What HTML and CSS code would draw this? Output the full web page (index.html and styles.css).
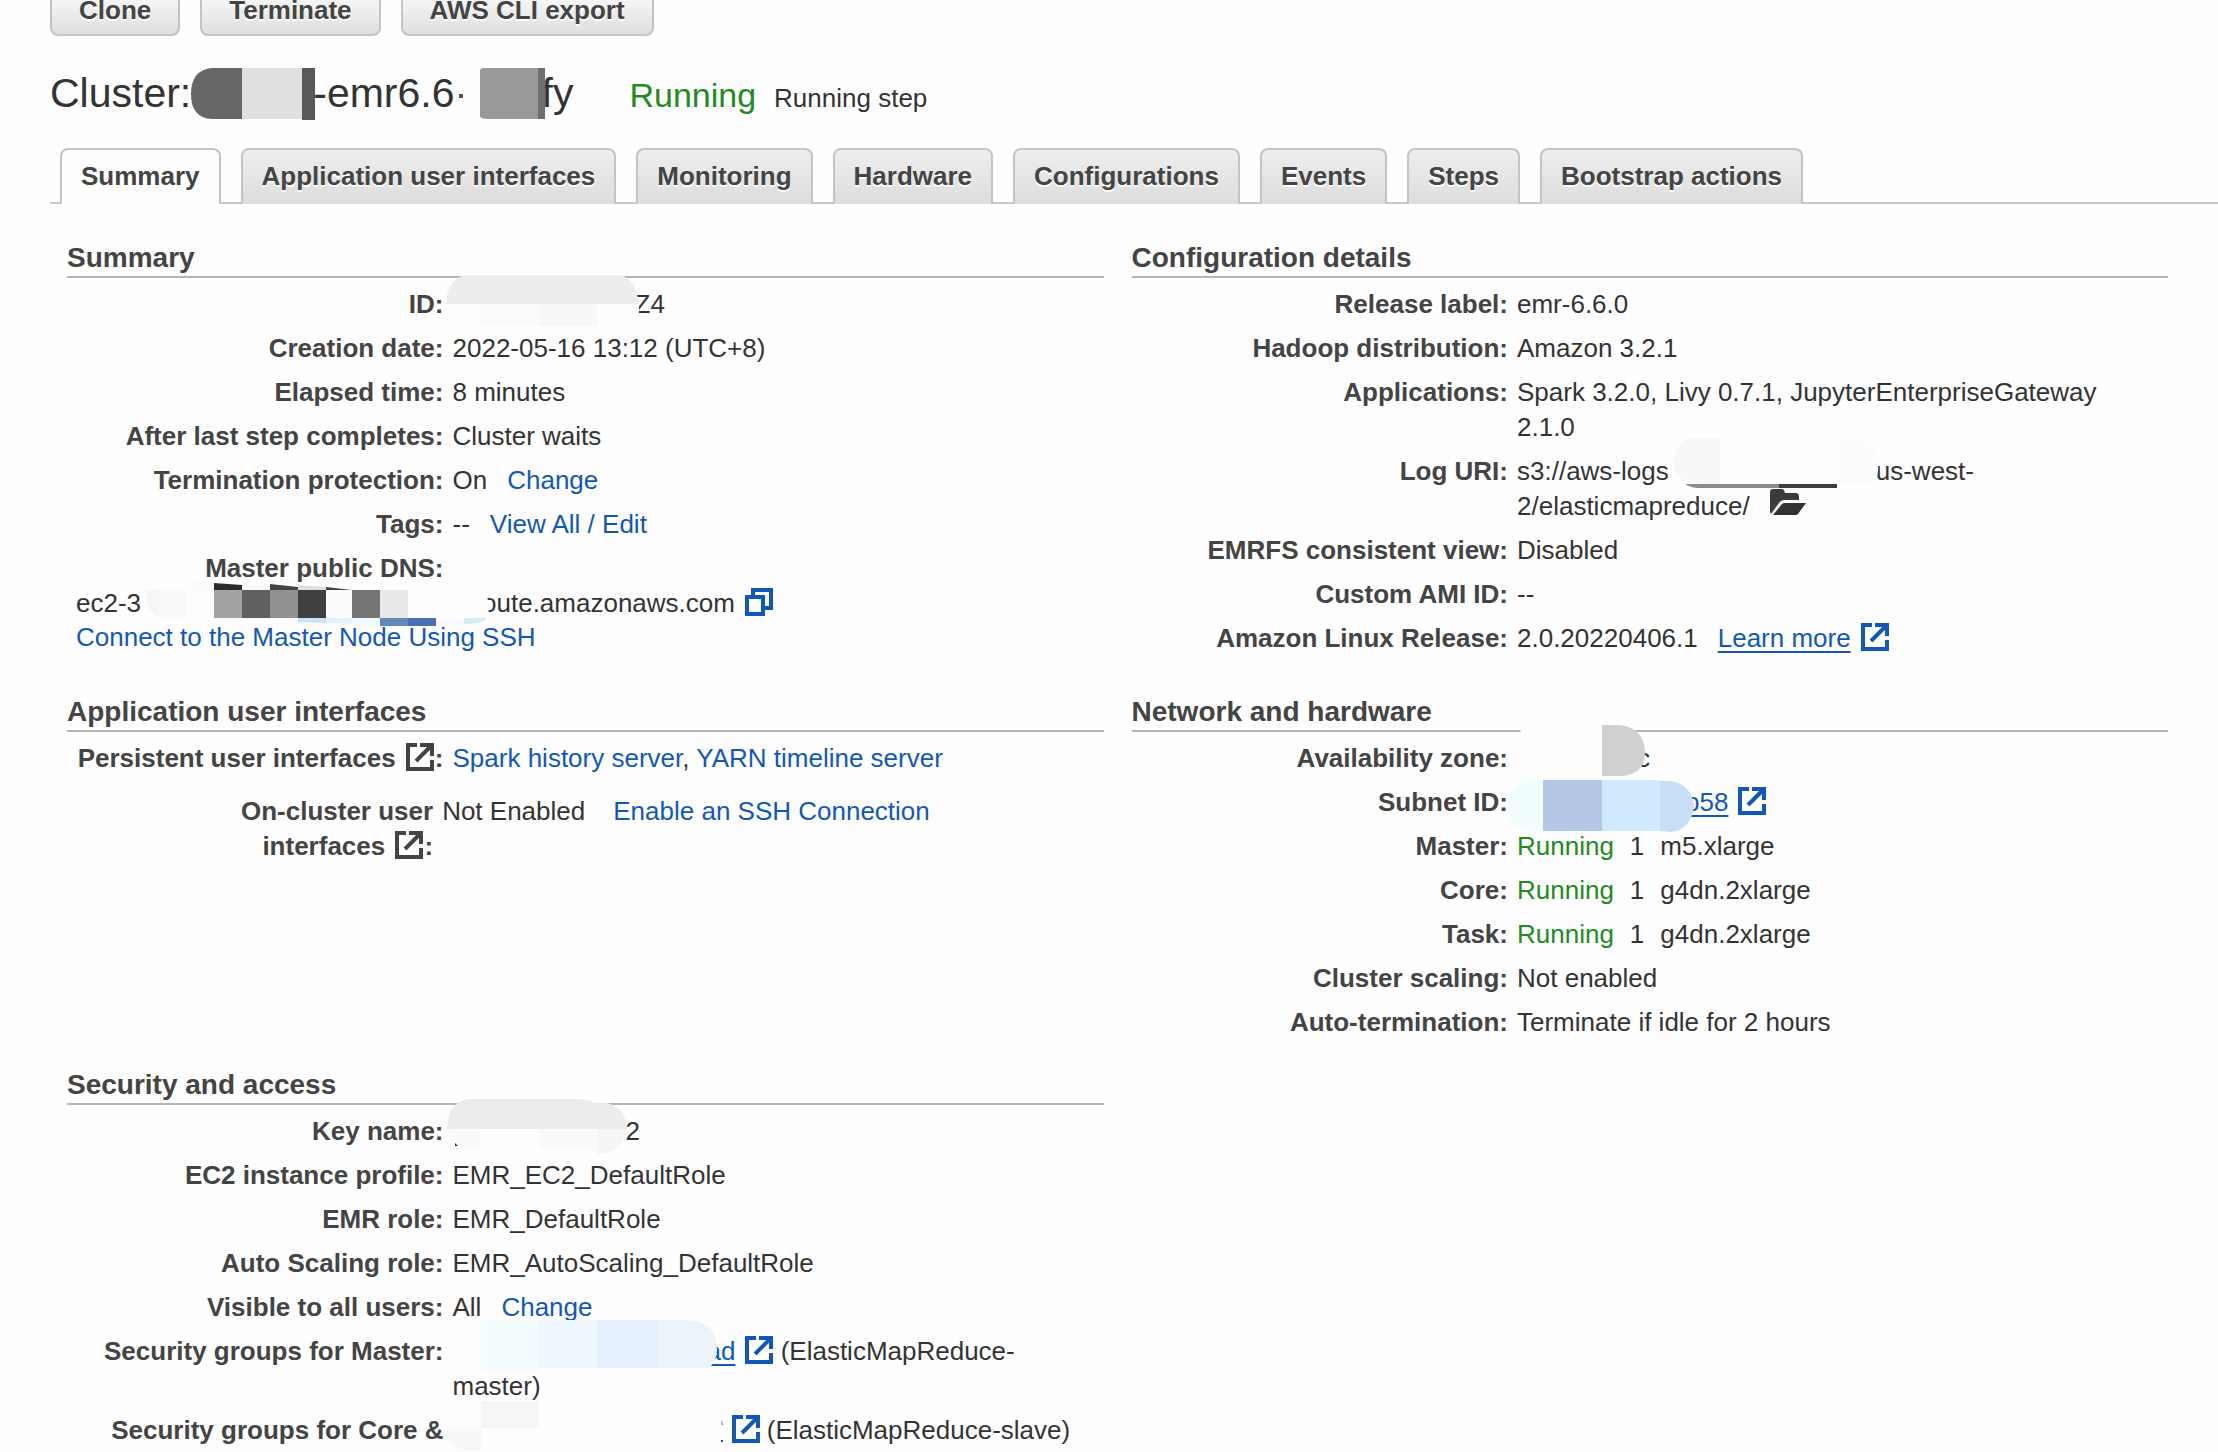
FILE: index.html
```html
<!DOCTYPE html>
<html lang="en">
<head>
<meta charset="utf-8">
<title>Cluster details</title>
<link rel="stylesheet" href="styles.css">
</head>
<body>
<svg class="sprite" aria-hidden="true">
  <symbol id="external" viewBox="0 0 28 28">
    <path d="M11 2H2V26H26V17M14 2H26V13M10 18L25 3" fill="none" stroke="currentColor" stroke-width="4"/>
  </symbol>
  <symbol id="copy" viewBox="0 0 28 28">
    <path d="M2 9H18V26H2ZM8 9V2H26V20H18" fill="none" stroke="currentColor" stroke-width="4"/>
  </symbol>
</svg>

<div class="toolbar">
  <button type="button">Clone</button>
  <button type="button">Terminate</button>
  <button type="button">AWS CLI export</button>
</div>

<header class="title">
  <h1>Cluster:<span class="mask mask-name"><svg viewBox="191 81 122 26" width="122" height="26"><path d="M242 68H212Q191 70 191 94T212 119H242Z" fill="#666"/><path d="M242 68H302V119H242Z" fill="#e0e0e0"/><path d="M302 68H315V120H302Z" fill="#595959"/></svg></span>-emr6.6<span class="mask mask-suffix"><svg viewBox="455 81 87 26" width="87" height="26"><path d="M459 94H463V98H459Z" fill="#555"/><path d="M538 68H484Q480 68 480 71V116Q480 119 488 119H538Z" fill="#999"/><path d="M538 68H545V119H538Z" fill="#6e6e6e"/></svg></span>fy</h1>
  <span class="state ok">Running</span>
  <span class="step">Running step</span>
</header>

<nav class="tabs">
  <a class="tab active" href="#summary">Summary</a>
  <a class="tab" href="#interfaces">Application user interfaces</a>
  <a class="tab" href="#monitoring">Monitoring</a>
  <a class="tab" href="#hardware">Hardware</a>
  <a class="tab" href="#configurations">Configurations</a>
  <a class="tab" href="#events">Events</a>
  <a class="tab" href="#steps">Steps</a>
  <a class="tab" href="#bootstrap">Bootstrap actions</a>
</nav>

<main class="panels">
  <section class="tall" id="summary">
    <h2>Summary</h2>
    <dl>
      <div class="row"><dt>ID:</dt><dd><span class="mask mask-id"><svg viewBox="452 288 182 26" width="182" height="26"><path d="M445 305Q446 279 466 276H617Q634 277 638 305Z" fill="#ededed"/><path d="M445 305H638V327H468Q450 327 445 305Z" fill="#fefefe"/><path d="M479 305H538V327H479Z" fill="#fbfbfb"/><path d="M538 305H596V327H538Z" fill="#f8f8f8"/></svg></span>Z4</dd></div>
      <div class="row"><dt>Creation date:</dt><dd>2022-05-16 13:12 (UTC+8)</dd></div>
      <div class="row"><dt>Elapsed time:</dt><dd>8 minutes</dd></div>
      <div class="row"><dt>After last step completes:</dt><dd>Cluster waits</dd></div>
      <div class="row"><dt>Termination protection:</dt><dd>On<a class="action" href="#change">Change</a></dd></div>
      <div class="row"><dt>Tags:</dt><dd>--<a class="action" href="#tags">View All / Edit</a></dd></div>
      <div class="row"><dt>Master public DNS:</dt>
        <dd class="wide">ec2-3<span class="mask mask-dns"><svg viewBox="141 584 341 26" width="341" height="26"><path d="M145 588Q160 586 186 585V578H214V588H436L480 590Q488 592 489 603T480 620L440 623H186L172 616H160Q146 612 145 588Z" fill="#fdfdfd"/><path d="M145 588H159V616Q147 610 145 588Z" fill="#f6f6f8"/><path d="M159 588H186V616H159Z" fill="#fafafb"/><path d="M186 578L214 581V588H186Z" fill="#fafcff"/><path d="M214 581L242 583V588H214Z" fill="#2c2c2e"/><path d="M242 583H270V588H242Z" fill="#f5f8fa"/><path d="M270 582L298 585V588H270Z" fill="#444"/><path d="M298 583L326 585V588H298Z" fill="#ddd"/><path d="M326 585L352 588H326Z" fill="#444"/><path d="M214 588H242V616H214Z" fill="#a3a3a3"/><path d="M242 588H270V616H242Z" fill="#606060"/><path d="M270 588H298V616H270Z" fill="#919191"/><path d="M298 588H326V616H298Z" fill="#404042"/><path d="M326 588H352V616H326Z" fill="#fcfcfe"/><path d="M352 588H380V616H352Z" fill="#757575"/><path d="M380 588H408V616H380Z" fill="#e9e9eb"/><path d="M298 616H326V621L298 620Z" fill="#c9e4f8"/><path d="M326 616H352V622L326 621Z" fill="#e4f2f9"/><path d="M352 616H380V623H352Z" fill="#effdfe"/><path d="M380 616H408V624H380Z" fill="#6486b8"/><path d="M408 616H436V624H408Z" fill="#4870b5"/><path d="M436 616H464V622H436Z" fill="#f8faff"/><path d="M464 616H487Q484 622 464 622Z" fill="#d9ecf7"/></svg></span>oute.amazonaws.com<button class="icon-button" type="button" aria-label="Copy"><svg class="icon"><use href="#copy"/></svg></button><br><a href="#ssh">Connect to the Master Node Using SSH</a></dd></div>
    </dl>
  </section>

  <section class="tall">
    <h2>Configuration details</h2>
    <dl>
      <div class="row"><dt>Release label:</dt><dd>emr-6.6.0</dd></div>
      <div class="row"><dt>Hadoop distribution:</dt><dd>Amazon 3.2.1</dd></div>
      <div class="row"><dt>Applications:</dt><dd>Spark 3.2.0, Livy 0.7.1, JupyterEnterpriseGateway 2.1.0</dd></div>
      <div class="row"><dt>Log URI:</dt><dd>s3://aws-logs<span class="mask mask-log"><svg viewBox="1668 453 207 26" width="207" height="26"><path d="M1719 437H1693Q1673 440 1673 460T1690 483H1719Z" fill="#f8f8f8"/><path d="M1719 437H1836V483H1719Z" fill="#fdfdfd"/><path d="M1836 437H1858Q1875 442 1877 462T1864 483H1836Z" fill="#fcfcfc"/><path d="M1684 483H1778V487H1698Q1690 487 1684 483Z" fill="#8c8c8c"/><path d="M1778 483H1836V487H1778Z" fill="#3e3e3e"/></svg></span>us-west-2/elasticmapreduce/<svg class="folder" viewBox="0 0 36 26"><path d="M0 23V3Q0 0 3 0H12Q14 0 15 4H26Q29 4 29 8V11H14Q11 11 9 14L1 25Z" fill="#3b3b3b"/><path d="M3 26L12 15Q13 14 15 14H36L28 25Q27 26 26 26Z" fill="#333"/></svg></dd></div>
      <div class="row"><dt>EMRFS consistent view:</dt><dd>Disabled</dd></div>
      <div class="row"><dt>Custom AMI ID:</dt><dd>--</dd></div>
      <div class="row"><dt>Amazon Linux Release:</dt><dd>2.0.20220406.1<a class="action underlined" href="#learn">Learn more</a><svg class="icon link-icon"><use href="#external"/></svg></dd></div>
    </dl>
  </section>

  <section id="interfaces">
    <h2>Application user interfaces</h2>
    <dl>
      <div class="row"><dt>Persistent user interfaces <svg class="icon"><use href="#external"/></svg>:</dt><dd><a href="#spark">Spark history server</a>, <a href="#yarn">YARN timeline server</a></dd></div>
      <div class="row on-cluster"><dt>On-cluster user interfaces <svg class="icon"><use href="#external"/></svg>:</dt><dd>Not Enabled<a class="action spaced" href="#enable">Enable an SSH Connection</a></dd></div>
    </dl>
  </section>

  <section id="hardware">
    <h2>Network and hardware</h2>
    <dl>
      <div class="row"><dt>Availability zone:</dt><dd><span class="mask mask-zone"><svg viewBox="1516 742 120 26" width="120" height="26"><path d="M1601 726H1530Q1514 730 1514 750T1530 776H1601Z" fill="#fefefe"/><path d="M1601 726H1620Q1643 730 1644 752T1622 777H1601Z" fill="#d1d1d1"/></svg></span>c</dd></div>
      <div class="row"><dt>Subnet ID:</dt><dd><span class="mask mask-subnet"><svg viewBox="1516 785 168 26" width="168" height="26"><path d="M1542 780H1528Q1507 785 1506 806T1528 831H1542Z" fill="#f2fdfe"/><path d="M1542 780H1601V831H1542Z" fill="#b4c7e6"/><path d="M1601 780H1659V831H1601Z" fill="#d1e9fd"/><path d="M1659 781H1670Q1690 784 1693 806Q1690 830 1670 832L1659 831Z" fill="#c9dff7"/></svg></span><a class="underlined" href="#subnet">b58</a><svg class="icon link-icon"><use href="#external"/></svg></dd></div>
      <div class="row"><dt>Master:</dt><dd><span class="ok">Running</span><span class="count">1</span>m5.xlarge</dd></div>
      <div class="row"><dt>Core:</dt><dd><span class="ok">Running</span><span class="count">1</span>g4dn.2xlarge</dd></div>
      <div class="row"><dt>Task:</dt><dd><span class="ok">Running</span><span class="count">1</span>g4dn.2xlarge</dd></div>
      <div class="row"><dt>Cluster scaling:</dt><dd>Not enabled</dd></div>
      <div class="row"><dt>Auto-termination:</dt><dd>Terminate if idle for 2 hours</dd></div>
    </dl>
  </section>

  <section>
    <h2>Security and access</h2>
    <dl>
      <div class="row"><dt>Key name:</dt><dd><span class="mask mask-key"><svg viewBox="452 1115 173 26" width="173" height="26"><path d="M446 1130Q447 1102 468 1100H574Q586 1100 594 1104H606Q624 1108 626 1130Z" fill="#ececec"/><path d="M446 1130H626Q622 1152 602 1155L582 1150H468Q450 1149 446 1130Z" fill="#fefefe"/><path d="M446 1130H480V1150H468Q450 1149 446 1130Z" fill="#fafafb"/><path d="M538 1130H596V1154L582 1150H538Z" fill="#fafafa"/><path d="M596 1130H626Q622 1154 596 1155Z" fill="#f5f5f5"/><path d="M454 1144L457 1147H454Z" fill="#333"/></svg></span>2</dd></div>
      <div class="row"><dt>EC2 instance profile:</dt><dd>EMR_EC2_DefaultRole</dd></div>
      <div class="row"><dt>EMR role:</dt><dd>EMR_DefaultRole</dd></div>
      <div class="row"><dt>Auto Scaling role:</dt><dd>EMR_AutoScaling_DefaultRole</dd></div>
      <div class="row"><dt>Visible to all users:</dt><dd>All<a class="action" href="#visibility">Change</a></dd></div>
      <div class="row"><dt>Security groups for Master:</dt><dd><span class="mask mask-master"><svg viewBox="452 1334 254 26" width="254" height="26"><path d="M480 1320H538V1368H480Z" fill="#f3fdff"/><path d="M538 1320H597V1368H538Z" fill="#eff7fe"/><path d="M597 1320H657V1368H597Z" fill="#e6f0fd"/><path d="M657 1320H684Q716 1320 716 1350Q714 1368 704 1368H657Z" fill="#ecf3fb"/><path d="M480 1368H538V1371H480Z" fill="#f9f9f9"/></svg></span><a class="underlined" href="#sg-master">ad</a><svg class="icon link-icon"><use href="#external"/></svg> (ElasticMapReduce-master)</dd></div>
      <div class="row"><dt>Security groups for Core &amp;</dt><dd><span class="mask mask-core"><svg viewBox="452 1412 269 26" width="269" height="26"><path d="M480 1400H464Q444 1404 442 1427H480Z" fill="#fefcfc"/><path d="M480 1400H538V1427H480Z" fill="#f6f6f4"/><path d="M442 1427H480V1450H464Q446 1446 442 1427Z" fill="#f7f9f9"/><path d="M480 1427H538V1450H480ZM538 1402H700Q718 1404 719 1427T706 1451H538Z" fill="#fefefc"/><path d="M720 1418L722 1424H721ZM720 1439H722V1441H720Z" fill="#1258b9"/></svg></span><svg class="icon link-icon"><use href="#external"/></svg> (ElasticMapReduce-slave)</dd></div>
    </dl>
  </section>
</main>
</body>
</html>
```
FILE: styles.css
```css
* {
  box-sizing: border-box;
}

body {
  margin: 0;
  background: #fefefe;
  color: #333;
  font: 26px/35px "Liberation Sans", Arial, sans-serif;
}

.sprite {
  display: none;
}

a {
  color: #1258b9;
  text-decoration: none;
}

/* Toolbar, scrolled partly out of view */
.toolbar {
  display: flex;
  gap: 20px;
  margin-top: -16px;
  padding: 0 50px;
}

.toolbar button {
  padding: 9px 27px;
  border: 2px solid #c4c4c4;
  border-radius: 8px;
  background: linear-gradient(#fff, #dedede);
  color: #444;
  font: bold 26px/30px "Liberation Sans", Arial, sans-serif;
  text-shadow: 0 2px 0 #fff;
}

/* Cluster title */
.title {
  display: flex;
  align-items: baseline;
  margin: 33px 50px 31px;
}

h1 {
  margin: 0;
  font-size: 41px;
  font-weight: normal;
  line-height: 48px;
  white-space: nowrap;
}

.state {
  margin: 0 18px 0 56px;
  font-size: 34px;
}

.ok {
  color: #228b22;
}

/* Tabs */
.tabs {
  display: flex;
  gap: 20px;
  margin-left: 50px;
  padding-left: 10px;
  border-bottom: 2px solid #c8c8c8;
}

.tab {
  margin-bottom: -2px;
  padding: 9px 19px 10px;
  border: 2px solid #c4c4c4;
  border-bottom: 0;
  border-radius: 8px 8px 0 0;
  background: linear-gradient(#eee, #ddd);
  color: #444;
  font-weight: bold;
  text-shadow: 0 2px 0 #fff;
  white-space: nowrap;
}

.tab.active {
  background: #fefefe;
}

/* Detail panels */
.panels {
  display: grid;
  grid-template-columns: 1fr 1fr;
  gap: 22px 28px;
  padding: 36px 50px 0 67px;
}

.tall {
  padding-bottom: 11px;
}

h2 {
  margin: 0;
  border-bottom: 2px solid #b4b4b4;
  color: #444;
  font-size: 28px;
  line-height: 36px;
}

dl {
  margin: 0;
  padding-top: 5px;
}

.row {
  display: grid;
  grid-template-columns: 37% 1fr;
  padding: 4px 0 5px;
}

dt {
  padding-right: 7px;
  color: #444;
  font-weight: bold;
  text-align: right;
}

dt .icon {
  margin: 0 1px 0 3px;
}

dd {
  margin: 0;
  padding: 0 10px 0 2px;
}

.wide {
  grid-column: 1 / -1;
  padding-left: 9px;
  line-height: 34px;
}

.on-cluster {
  grid-template-columns: 36% 1fr;
  padding-top: 13px;
}

.on-cluster dt {
  padding-left: 60px;
}

.action {
  margin-left: 20px;
}

.spaced {
  margin-left: 28px;
}

.underlined {
  text-decoration: underline;
  text-decoration-thickness: 2px;
  text-underline-offset: 4px;
}

.count {
  margin: 0 16px;
}

.icon {
  width: 28px;
  height: 28px;
  vertical-align: -4px;
}

.link-icon {
  margin-left: 10px;
  color: #1258b9;
}

.icon-button {
  margin: 0 0 0 10px;
  padding: 0;
  border: 0;
  background: none;
  color: #1258b9;
  font: inherit;
  line-height: 28px;
}

.folder {
  width: 36px;
  height: 26px;
  margin-left: 20px;
}

/* Painted blocks hiding private values */
.mask {
  display: inline-block;
  position: relative;
  height: 26px;
}

.mask svg {
  position: absolute;
  top: 0;
  left: 0;
  overflow: visible;
}

.mask-name { width: 122px; }
.mask-suffix { width: 87px; }
.mask-id { width: 182px; }
.mask-dns { width: 341px; }
.mask-log { width: 207px; }
.mask-zone { width: 120px; }
.mask-subnet { width: 168px; }
.mask-key { width: 173px; }
.mask-master { width: 254px; }
.mask-core { width: 269px; }
```
